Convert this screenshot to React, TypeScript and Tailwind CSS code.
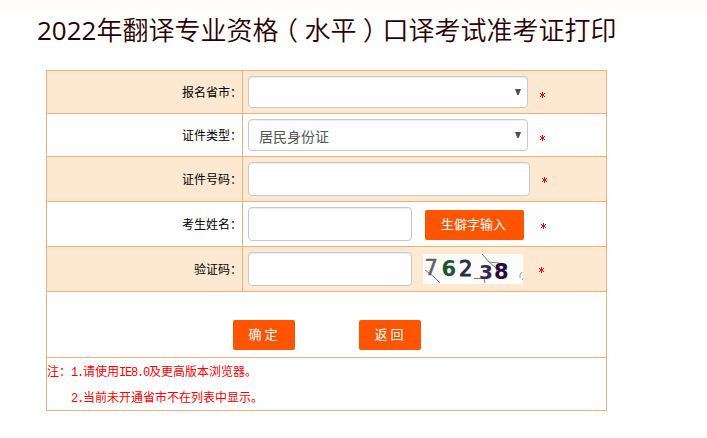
import type { ReactNode } from "react";

const inputClass = "block h-[34px] rounded-[4px] border border-[#c8c9cc] bg-white px-2.5 text-sm text-[#555] outline-none shadow-[inset_0_1px_1px_rgba(0,0,0,0.075)]";
const buttonClass = "h-[30px] rounded-[2px] bg-[#ff5500] text-white text-[13px] leading-[28px] pb-[2px] pr-[2px]";

function Required({ className }: { className: string }) {
    return (
        <svg className={`w-[5px] h-[6px] shrink-0 text-[#f00] ${className}`} viewBox="0 0 5 6" fill="currentColor">
            <path d="M2 0H3V6H2ZM0 1H1V2H0ZM4 1H5V2H4ZM1 2H4V4H1ZM0 4H1V5H0ZM4 4H5V5H4Z" />
        </svg>
    );
}

function Row({ label, className, children }: { label: string; className: string; children: ReactNode }) {
    return (
        <div className={`flex border-b border-[#f0b080] ${className}`}>
            <label className="w-[196px] shrink-0 border-r border-[#f0b080] flex items-center justify-end text-xs text-black">{label}</label>
            <div className="flex-1 flex items-start pl-[5px] pt-[5px]">{children}</div>
        </div>
    );
}

function Select({ options }: { options: string[] }) {
    return (
        <div className="relative w-[280px]">
            <select className="appearance-none block w-full h-8 rounded-[4px] border border-[#c8c9cc] bg-white px-2.5 pt-[2px] text-sm text-[#555] outline-none shadow-[inset_0_1px_1px_rgba(0,0,0,0.075)]">
                {options.map((o) => (
                    <option key={o}>{o}</option>
                ))}
            </select>
            <svg className="absolute right-[7px] top-[13px] w-[6px] h-[6px] pointer-events-none" viewBox="0 0 6 6">
                <path d="M0 0H6L3.7 6H2.3Z" fill="#505050" />
            </svg>
        </div>
    );
}

function Captcha() {
    return (
        <svg className="w-[100px] h-[30px] ml-[11px] mt-[2px] shrink-0 bg-[#fcfcfb]" viewBox="0 0 100 30" fontFamily="DejaVu Sans, sans-serif">
            <g fill="none" strokeWidth="1">
                <path d="M2 16L10 22L17 29" stroke="#777" />
                <path d="M59 0L66 8L73 14L76 24" stroke="#777" />
                <path d="M66 8L76 9L84 16" stroke="#888" />
                <path d="M51 24.5H61L62 29" stroke="#777" />
                <path d="M97 24V21L99 18M99 26L100 24" stroke="#999" />
            </g>
            <text x="1.5" y="21" fontSize="21" fill="#5a6064" stroke="#5a6064" strokeWidth="0.5">7</text>
            <text x="18.5" y="22" fontSize="21" fontWeight="700" fill="#1d5433">6</text>
            <text x="36" y="22" fontSize="21" fill="#292b45" stroke="#292b45" strokeWidth="1">2</text>
            <text x="56" y="24.5" fontSize="20" fontWeight="700" fill="#38265a">3</text>
            <text x="71" y="25" fontSize="21" fontWeight="700" fill="#250a3d">8</text>
        </svg>
    );
}

export default function App() {
    return (
        <div className="w-[707px] h-[438px] bg-white overflow-hidden font-['Noto_Sans_CJK_SC',sans-serif]">
            <div className="h-[70px] bg-linear-to-b from-[#fffbf9] to-white to-20%">
                <h1 className="pl-[37px] pt-[10px] text-[26px] leading-[40px] font-[350] text-[#2b0000] whitespace-nowrap font-['Open_Sans','Noto_Sans_CJK_SC',sans-serif]">
                    <span className="font-normal">2022</span>年翻译专业资格
                    <span className="inline-block w-[26px] text-center [font-feature-settings:'halt']">（</span>
                    水平
                    <span className="inline-block w-[26px] text-center [font-feature-settings:'halt']">）</span>
                    口译考试准考证打印
                </h1>
            </div>
            <form className="ml-[46px] w-[561px] border border-b-0 border-[#f0b080]">
                <Row label="报名省市：" className="h-[43px] bg-[#fde9d1]">
                    <Select options={[""]} />
                    <Required className="ml-[12px] mt-[16px]" />
                </Row>
                <Row label="证件类型：" className="h-[43px]">
                    <Select options={["居民身份证"]} />
                    <Required className="ml-[12px] mt-[16px]" />
                </Row>
                <Row label="证件号码：" className="h-[45px] bg-[#fde9d1]">
                    <input type="text" className={`${inputClass} w-[282px]`} />
                    <Required className="ml-[12px] mt-[15px]" />
                </Row>
                <Row label="考生姓名：" className="h-[45px]">
                    <input type="text" className={`${inputClass} w-[164px]`} />
                    <button type="button" className={`${buttonClass} w-[99px] ml-[13px] mt-[3px]`}>生僻字输入</button>
                    <Required className="ml-[17px] mt-[16px]" />
                </Row>
                <Row label="验证码：" className="h-[45px] bg-[#fde9d1]">
                    <input type="text" className={`${inputClass} w-[164px]`} />
                    <Captcha />
                    <Required className="ml-[16px] mt-[15px]" />
                </Row>
                <div className="h-[66px] border-b border-[#f0b080] flex gap-16 pl-[186px] pt-[28px]">
                    <button type="button" className={`${buttonClass} w-[62px]`}>确 定</button>
                    <button type="button" className={`${buttonClass} w-[62px]`}>返 回</button>
                </div>
                <div className="h-[53px] border-b border-[#f0b080] text-xs leading-[26px] text-[#f00]">
                    <p className="h-[26px]">
                        注：<span className="font-['Liberation_Mono',monospace] tracking-[-1.2px]">1.</span>请使用<span className="font-['Liberation_Mono',monospace] tracking-[-1.2px]">IE8.0</span>及更高版本浏览器。
                    </p>
                    <p className="h-[26px] pl-6">
                        <span className="font-['Liberation_Mono',monospace] tracking-[-1.2px]">2.</span>当前未开通省市不在列表中显示。
                    </p>
                </div>
            </form>
        </div>
    );
}
